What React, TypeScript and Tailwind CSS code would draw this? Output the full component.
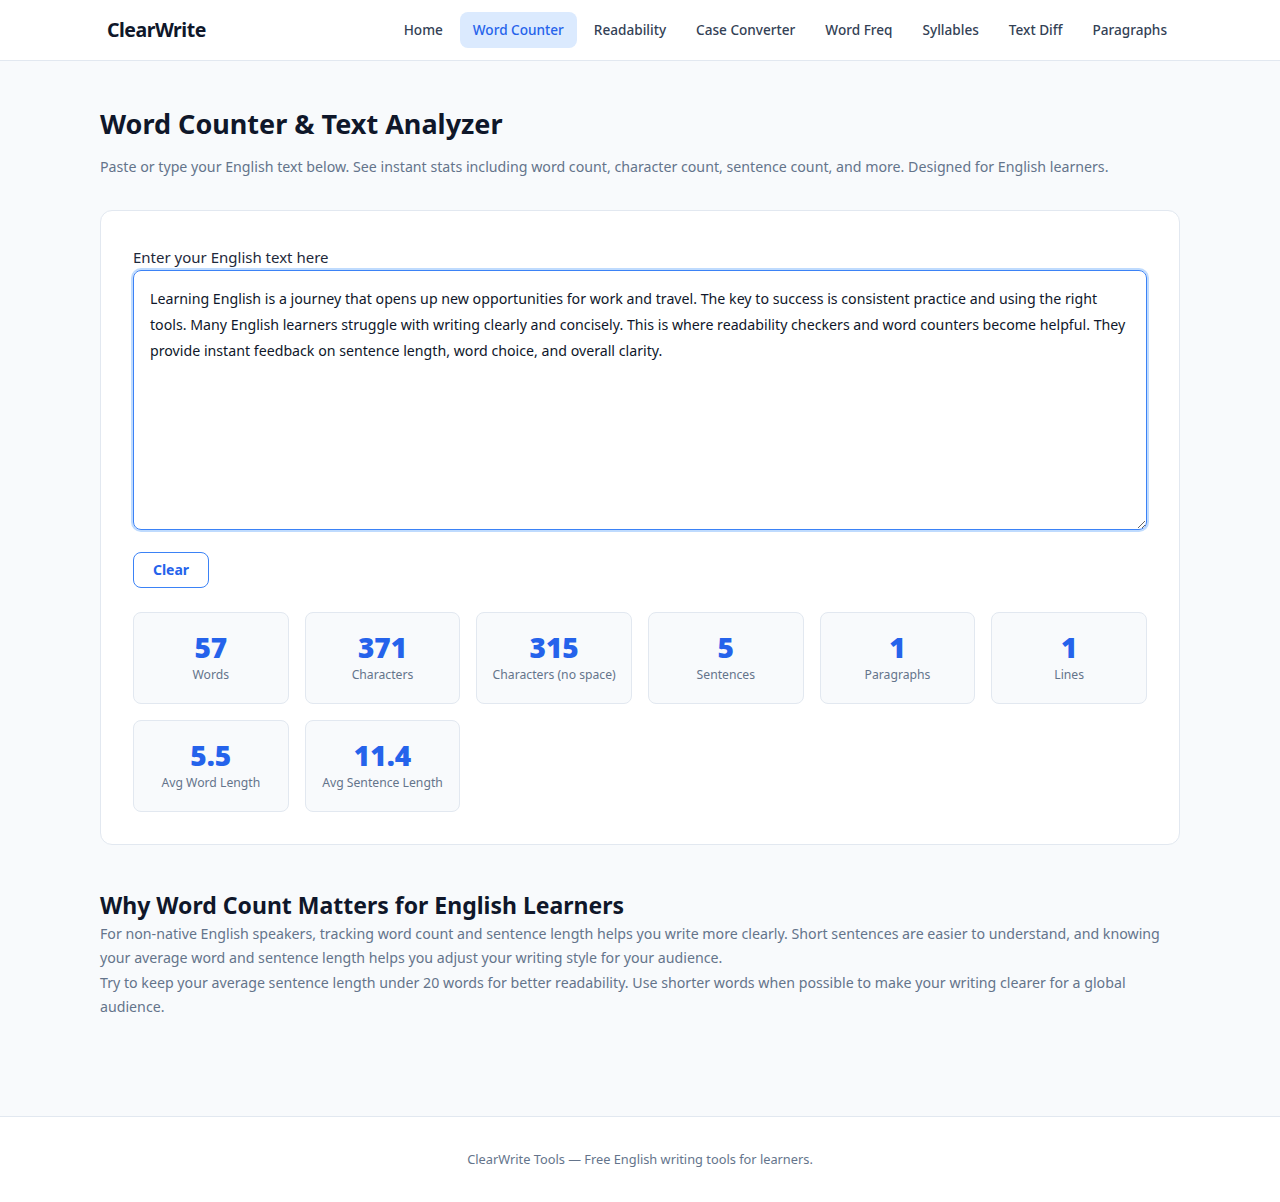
import { useState } from 'react';

const NAV = ['Home', 'Word Counter', 'Readability', 'Case Converter', 'Word Freq', 'Syllables', 'Text Diff', 'Paragraphs'];

const SAMPLE =
  'Learning English is a journey that opens up new opportunities for work and travel. The key to success is consistent practice and using the right tools. Many English learners struggle with writing clearly and concisely. This is where readability checkers and word counters become helpful. They provide instant feedback on sentence length, word choice, and overall clarity.';

function analyze(text: string) {
  const words = text.trim() ? text.trim().split(/\s+/) : [];
  const sentences = text.split(/[.!?]+/).filter((s) => s.trim()).length;
  const paragraphs = text.split(/\n\s*\n/).filter((p) => p.trim()).length;
  const lines = text ? text.split('\n').filter((l) => l.trim()).length : 0;
  const letters = words.reduce((n, w) => n + w.replace(/[^A-Za-z0-9']/g, '').length, 0);
  return [
    { value: String(words.length), label: 'Words' },
    { value: String(text.length), label: 'Characters' },
    { value: String(text.replace(/\s/g, '').length), label: 'Characters (no space)' },
    { value: String(sentences), label: 'Sentences' },
    { value: String(paragraphs), label: 'Paragraphs' },
    { value: String(lines), label: 'Lines' },
    { value: words.length ? (letters / words.length).toFixed(1) : '0', label: 'Avg Word Length' },
    { value: sentences ? (words.length / sentences).toFixed(1) : '0', label: 'Avg Sentence Length' },
  ];
}

export default function App() {
  const [text, setText] = useState(SAMPLE);
  const stats = analyze(text);
  const shown = text === SAMPLE
    ? ['57', '371', '315', '5', '1', '1', '5.5', '11.4'].map((v, i) => ({ ...stats[i], value: v }))
    : stats;

  return (
    <div className="min-h-screen bg-[#f8fafc] text-[#0f172a] font-['Noto_Sans','Open_Sans',sans-serif]">
      <header className="bg-white border-b border-[#e2e8f0]">
        <div className="max-w-[1080px] mx-auto h-[60px] flex items-center justify-between">
          <span className="ml-[7px] text-[19.5px] font-bold tracking-tight text-[#0f172a]">ClearWrite</span>
          <nav className="flex items-center gap-[4px]">
            {NAV.map((item) => (
              <a
                key={item}
                className={`px-[13px] h-[36px] flex items-center rounded-lg text-[13.6px] font-medium ${
                  item === 'Word Counter' ? 'bg-[#dbeafe] text-[#2563eb]' : 'text-[#334155]'
                }`}
              >
                {item}
              </a>
            ))}
          </nav>
        </div>
      </header>

      <main className="max-w-[1080px] mx-auto pt-[43px] pb-[96px]">
        <h1 className="text-[27px] font-bold leading-[40px]">Word Counter &amp; Text Analyzer</h1>
        <p className="mt-[11px] text-[14.2px] leading-[24px] text-[#64748b]">
          Paste or type your English text below. See instant stats including word count, character count, sentence count, and more. Designed for English learners.
        </p>

        <section className="mt-[31px] bg-white border border-[#e2e8f0] rounded-xl px-[32px] pt-[35px] pb-[32px]">
          <label className="block text-[15px] text-[#1e293b] mb-[1px]">Enter your English text here</label>
          <textarea
            value={text}
            onChange={(e) => setText(e.target.value)}
            className="w-full h-[260px] block rounded-lg border border-[#3b82f6] ring-2 ring-[#bfdbfe] outline-none px-[16px] py-[15px] text-[14.2px] leading-[26px] text-[#0f172a] resize-y"
          />
          <button
            onClick={() => setText('')}
            className="mt-[22px] h-[36px] w-[76px] rounded-lg border border-[#3b82f6] text-[#2563eb] text-[14px] font-bold bg-white"
          >
            Clear
          </button>

          <div className="mt-[24px] grid grid-cols-6 gap-x-[16px] gap-y-[16px]">
            {shown.map((s) => (
              <div
                key={s.label}
                className="h-[92px] rounded-lg border border-[#e2e8f0] bg-[#f8fafc] flex flex-col items-center justify-center"
              >
                <div className="text-[28px] font-black leading-[34px] text-[#2563eb]">{s.value}</div>
                <div className="mt-[2px] text-[12.2px] text-[#64748b]">{s.label}</div>
              </div>
            ))}
          </div>
        </section>

        <h2 className="mt-[44px] text-[23px] font-bold leading-[32px]">Why Word Count Matters for English Learners</h2>
        <div className="mt-[1px] text-[14.2px] leading-[24.5px] text-[#64748b]">
          <p>
            For non-native English speakers, tracking word count and sentence length helps you write more clearly. Short sentences are easier to understand, and knowing your average word and sentence length helps you adjust your writing style for your audience.
          </p>
          <p>
            Try to keep your average sentence length under 20 words for better readability. Use shorter words when possible to make your writing clearer for a global audience.
          </p>
        </div>
      </main>

      <footer className="bg-white border-t border-[#e2e8f0] h-[87px] flex items-center justify-center">
        <p className="text-[12.8px] text-[#64748b]">ClearWrite Tools — Free English writing tools for learners.</p>
      </footer>
    </div>
  );
}
